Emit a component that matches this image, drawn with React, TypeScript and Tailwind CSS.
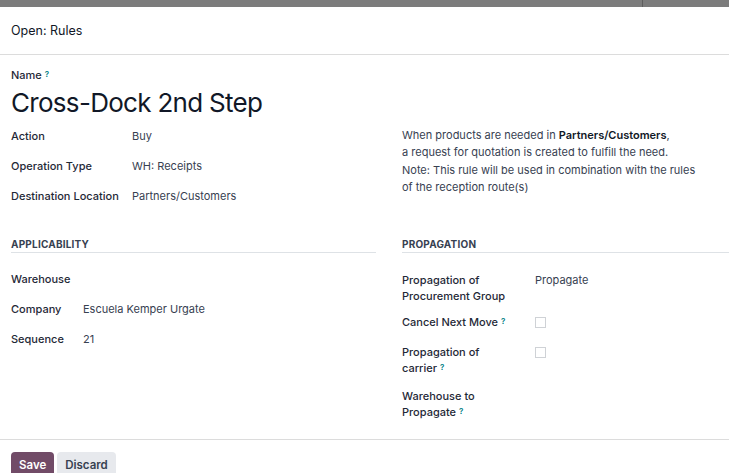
import React from 'react';

const Help = () => (
  <sup className="ml-[3px] text-[8px] font-semibold text-[#017e84] relative -top-[2px]">?</sup>
);

const Row = ({ label, value, w }: { label: React.ReactNode; value?: React.ReactNode; w: string }) => (
  <div className="flex h-[30px] items-center">
    <div className={`${w} shrink-0 font-medium text-[#1f2937]`}>{label}</div>
    <div className="text-[#374151]">{value}</div>
  </div>
);

export default function App() {
  return (
    <div
      className="h-[473px] w-[729px] overflow-hidden bg-white text-[11px] leading-4"
      style={{ fontFamily: 'Inter, "Noto Sans", sans-serif' }}
    >
      <div className="flex h-[7px] bg-[#7c7c7c]">
        <div className="w-[642px]" />
        <div className="flex-1 border-l border-[#5e5e5e]" />
      </div>

      <div className="flex h-[48px] items-center border-b border-[#dcdcdc] px-[11px] text-[12.5px] text-[#111827]">
        Open: Rules
      </div>

      <div className="h-[384px] pl-[11px] pt-[12px]">
        <div className="h-4 font-medium text-[#1f2937]">
          Name
          <Help />
        </div>
        <div className="mt-[3px] h-[34px] text-[26px] leading-[34px] tracking-[-0.7px] text-[#111827]">
          Cross-Dock 2nd Step
        </div>

        <div className="mt-[1px] flex">
          <div className="w-[365px]">
            <Row w="w-[121px]" label="Action" value="Buy" />
            <Row w="w-[121px]" label="Operation Type" value="WH: Receipts" />
            <Row w="w-[121px]" label="Destination Location" value="Partners/Customers" />
          </div>
          <div className="ml-[26px] pt-[6px] leading-[17.4px] text-[#374151]">
            When products are needed in <b className="font-semibold text-[#111827]">Partners/Customers</b>,
            <br />a request for quotation is created to fulfill the need.
            <br />
            Note: This rule will be used in combination with the rules
            <br />
            of the reception route(s)
          </div>
        </div>

        <div className="mt-[26px] flex">
          <div className="w-[365px]">
            <div className="border-b border-[#dee2e6] pb-[1px] text-[10px] font-bold leading-[14px] tracking-[0.2px] text-[#374151]">
              APPLICABILITY
            </div>
            <div className="mt-[11px]">
              <Row w="w-[72px]" label="Warehouse" />
              <Row w="w-[72px]" label="Company" value="Escuela Kemper Urgate" />
              <Row w="w-[72px]" label="Sequence" value="21" />
            </div>
          </div>
          <div className="ml-[26px] flex-1">
            <div className="border-b border-[#dee2e6] pb-[1px] text-[10px] font-bold leading-[14px] tracking-[0.2px] text-[#374151]">
              PROPAGATION
            </div>
            <div className="mt-[19px] flex">
              <div className="w-[133px] shrink-0 font-medium text-[#1f2937]">
                Propagation of
                <br />
                Procurement Group
              </div>
              <div className="text-[#374151]">Propagate</div>
            </div>
            <div className="mt-[10px] flex items-center">
              <div className="w-[133px] shrink-0 font-medium text-[#1f2937]">
                Cancel Next Move
                <Help />
              </div>
              <div className="h-[11px] w-[11px] border border-[#cfd2d6] bg-white" />
            </div>
            <div className="mt-[14px] flex">
              <div className="w-[133px] shrink-0 font-medium text-[#1f2937]">
                Propagation of
                <br />
                carrier
                <Help />
              </div>
              <div className="mt-[3px] h-[11px] w-[11px] border border-[#cfd2d6] bg-white" />
            </div>
            <div className="mt-[12px] flex">
              <div className="w-[133px] shrink-0 font-medium text-[#1f2937]">
                Warehouse to
                <br />
                Propagate
                <Help />
              </div>
            </div>
          </div>
        </div>
      </div>

      <div className="flex gap-[3px] border-t border-[#dcdcdc] px-[11px] pt-[12px]">
        <button className="h-[26px] rounded-[4px] bg-[#714b67] px-[8px] text-[11.5px] font-semibold text-white">
          Save
        </button>
        <button className="h-[26px] rounded-[4px] bg-[#e7e9ed] px-[8px] text-[11.5px] font-semibold text-[#374151]">
          Discard
        </button>
      </div>
    </div>
  );
}
